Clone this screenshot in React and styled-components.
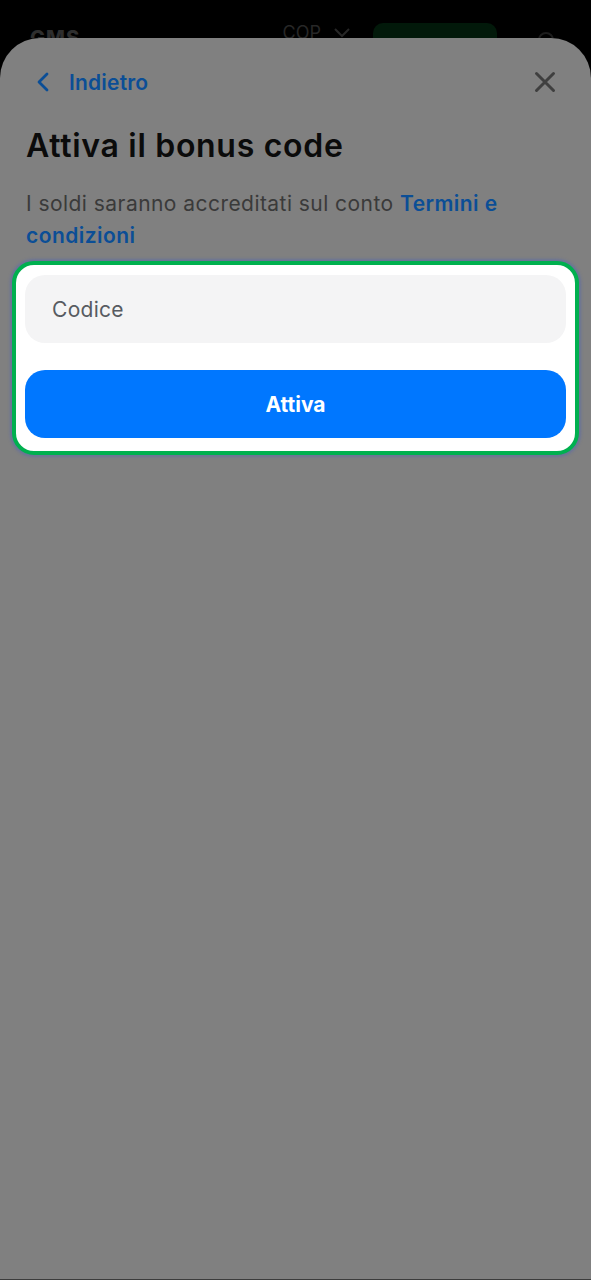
import React from "react";
import styled, { createGlobalStyle } from "styled-components";

const GlobalStyle = createGlobalStyle`
  html, body {
    margin: 0;
    padding: 0;
    background: #000;
  }
  body {
    font-family: Inter, "Noto Sans", sans-serif;
    -webkit-font-smoothing: antialiased;
  }
`;

const Screen = styled.div`
  width: 591px;
  height: 1280px;
  background: #000;
  display: flex;
  flex-direction: column;
  overflow: hidden;
`;

// app header behind the dimmed sheet, mostly covered
const TopBar = styled.div`
  height: 38px;
  flex: none;
  overflow: hidden;
  display: flex;
  align-items: flex-start;
  padding: 0 37px 0 30px;
`;

const Brand = styled.span`
  padding-top: 26px;
  font-size: 20px;
  font-weight: 800;
  color: #2e2e2e;
  letter-spacing: 1px;
`;

const Currency = styled.div`
  margin-left: auto;
  padding-top: 22px;
  display: flex;
  align-items: center;
  gap: 12px;
  font-size: 18px;
  color: #272727;
`;

const DepositButton = styled.div`
  margin-left: 22px;
  margin-top: 23px;
  width: 124px;
  height: 40px;
  border-radius: 10px;
  background: #02190a;
`;

const UserIcon = styled.div`
  margin-left: 41px;
  margin-top: 32px;
  width: 12px;
  height: 12px;
  border-radius: 50%;
  border: 2px solid #1c1c1c;
`;

const Sheet = styled.div`
  flex: 1;
  background: #808080;
  border-radius: 40px 40px 0 0;
  padding: 0 26px;
  display: flex;
  flex-direction: column;
  border-bottom: 1px solid #3c3c3c;
`;

const NavRow = styled.div`
  margin-top: 24px;
  height: 40px;
  display: flex;
  align-items: center;
  justify-content: space-between;
`;

const BackLink = styled.button`
  display: flex;
  align-items: center;
  gap: 13px;
  background: none;
  border: 0;
  padding: 0 0 0 6px;
  font-family: inherit;
  font-size: 21px;
  font-weight: 600;
  letter-spacing: 0.2px;
  color: #0b4e96;
  cursor: pointer;
`;

const CloseButton = styled.button`
  background: none;
  border: 0;
  padding: 0;
  margin-right: 8px;
  display: flex;
  cursor: pointer;
`;

const Title = styled.h1`
  margin: 24px 0 0;
  font-size: 32px;
  line-height: 40px;
  font-weight: 600;
  color: #0b0b0b;
  letter-spacing: 0.7px;
`;

const Description = styled.p`
  margin: 22px 0 0;
  font-size: 21px;
  line-height: 32px;
  color: #3a3a3a;
  letter-spacing: 0.45px;
`;

const Link = styled.a`
  color: #0b4e96;
  font-weight: 600;
  text-decoration: none;
`;

const Highlight = styled.div`
  margin: 9px -14px 0;
  background: #fff;
  border: 4px solid #00b04f;
  border-radius: 22px;
  box-shadow: 0 0 3px 2px rgba(60, 90, 200, 0.35);
  padding: 10px 9px 13px;
  display: flex;
  flex-direction: column;
  gap: 27px;
`;

const CodeInput = styled.input`
  height: 68px;
  box-sizing: border-box;
  border: 0;
  border-radius: 20px;
  background: #f4f4f5;
  padding: 0 27px;
  font-family: inherit;
  font-size: 21px;
  letter-spacing: 0.3px;
  color: #222;
  outline: none;

  &::placeholder {
    color: #575b61;
  }
`;

const ActivateButton = styled.button`
  height: 68px;
  border: 0;
  border-radius: 20px;
  background: #0077ff;
  color: #fff;
  font-family: inherit;
  font-size: 21px;
  font-weight: 700;
  cursor: pointer;
`;

const ChevronLeft = () => (
  <svg width="24" height="24" viewBox="0 0 24 24" fill="none">
    <path
      d="M15 4 L7 12 L15 20"
      stroke="#0b4e96"
      strokeWidth="2.8"
      strokeLinecap="round"
      strokeLinejoin="round"
    />
  </svg>
);

const CloseIcon = () => (
  <svg width="24" height="24" viewBox="0 0 24 24" fill="none">
    <path
      d="M3.5 3.5 L20.5 20.5 M20.5 3.5 L3.5 20.5"
      stroke="#3f3f3f"
      strokeWidth="3"
      strokeLinecap="round"
    />
  </svg>
);

const ChevronDown = () => (
  <svg width="18" height="18" viewBox="0 0 18 18" fill="none">
    <path d="M2 5 L9 12 L16 5" stroke="#272727" strokeWidth="2" />
  </svg>
);

export default function App() {
  return (
    <>
      <GlobalStyle />
      <Screen>
        <TopBar>
          <Brand>GMS</Brand>
          <Currency>
            COP
            <ChevronDown />
          </Currency>
          <DepositButton />
          <UserIcon />
        </TopBar>
        <Sheet>
          <NavRow>
            <BackLink>
              <ChevronLeft />
              Indietro
            </BackLink>
            <CloseButton aria-label="Chiudi">
              <CloseIcon />
            </CloseButton>
          </NavRow>
          <Title>Attiva il bonus code</Title>
          <Description>
            I soldi saranno accreditati sul conto{" "}
            <Link href="#">Termini e condizioni</Link>
          </Description>
          <Highlight>
            <CodeInput placeholder="Codice" />
            <ActivateButton>Attiva</ActivateButton>
          </Highlight>
        </Sheet>
      </Screen>
    </>
  );
}
